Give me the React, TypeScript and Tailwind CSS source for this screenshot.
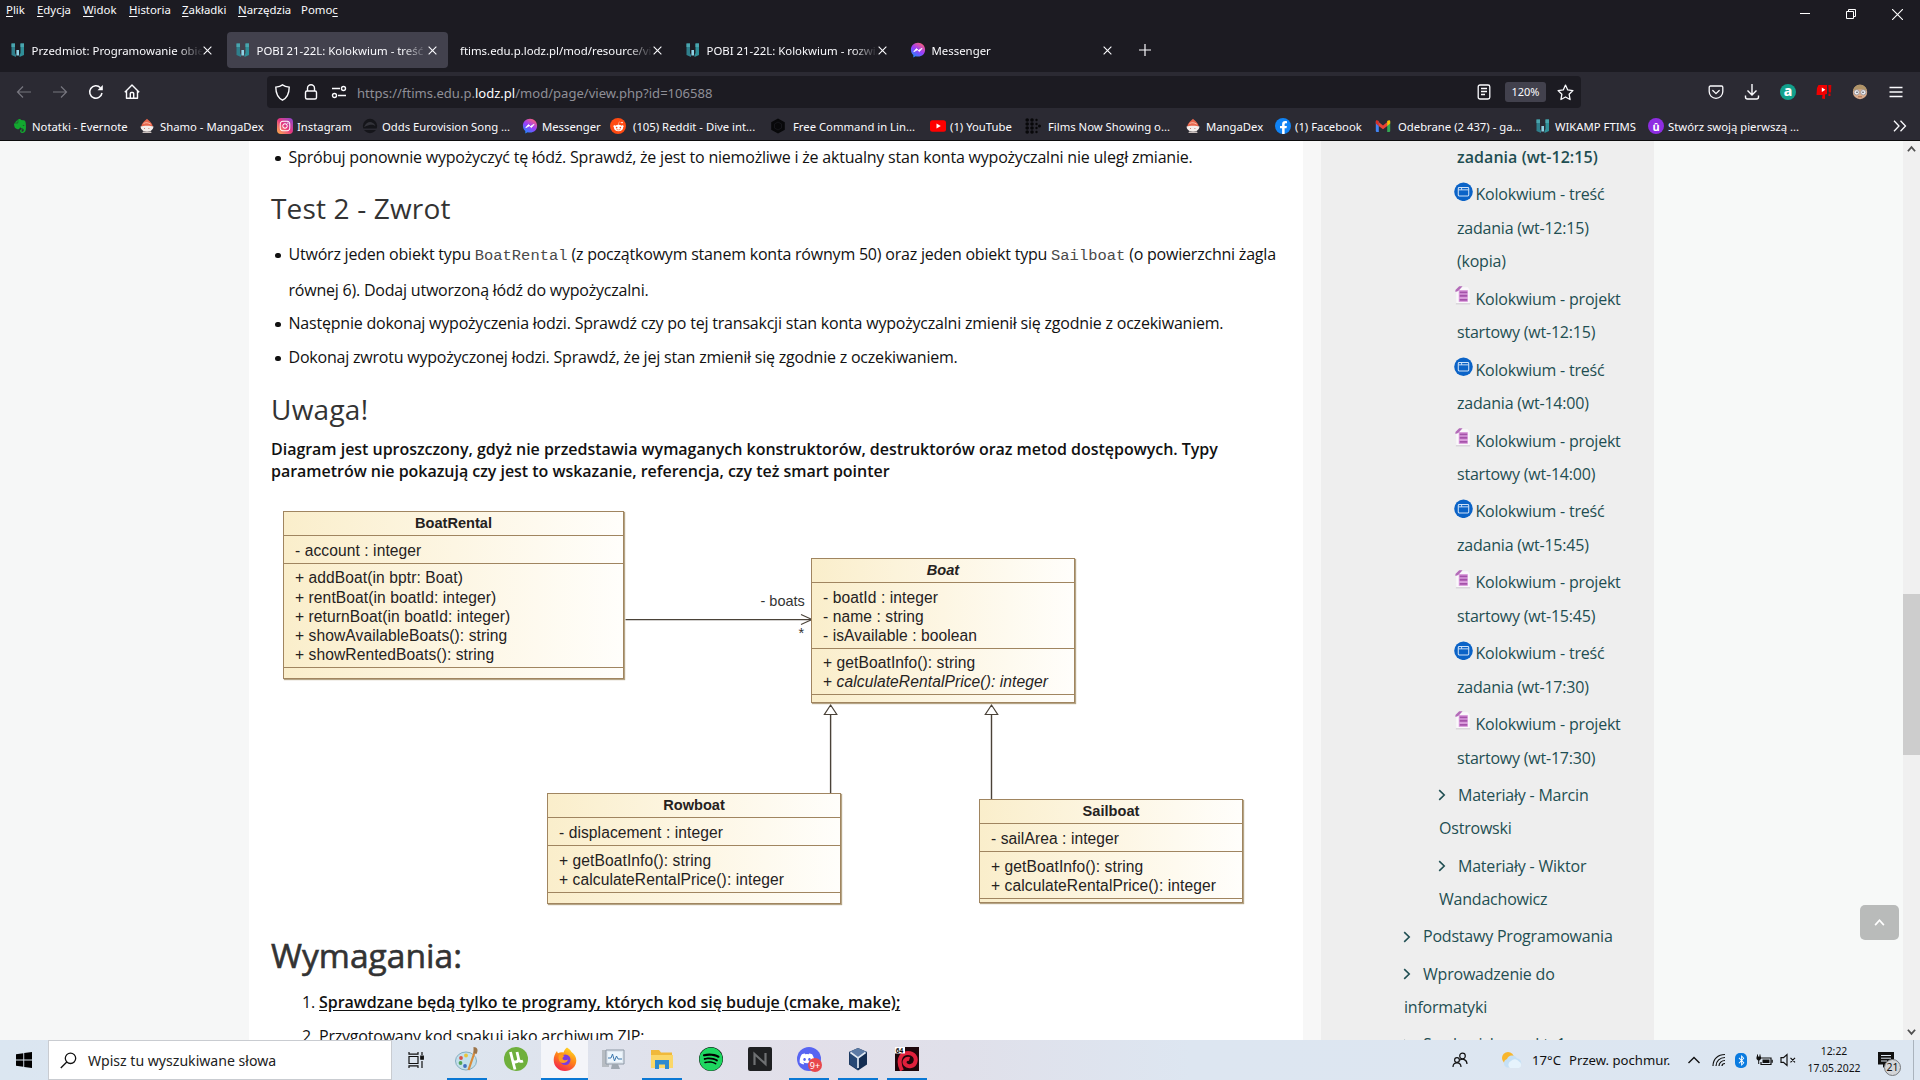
import type { ReactNode } from "react";
import {
  FaDiscord,
  FaEvernote,
  FaFacebookF,
  FaInstagram,
  FaRedditAlien,
  FaSpotify,
  FaBluetoothB,
} from "react-icons/fa";

/* ---------- favicons ---------- */

function Wikamp() {
  return (
    <svg viewBox="0 0 16 16" className="h-4 w-4 shrink-0">
      <path d="M1.500 1.500h3.500v9.500l1 2v2L1.500 13z" fill="#2f7f8c" />
      <path d="M10.500 1.500H14V13l-4.500 2v-2l1-2z" fill="#2f8f98" />
      <path d="M1.500 1.500H5v3.500H1.500zM10.500 1.500H14v3.500h-3.500z" fill="#4aa5ae" />
      <path d="M6.400 8h2.600v5.500H6.400z" fill="#8fd3e6" />
    </svg>
  );
}

function Messenger() {
  return (
    <svg viewBox="0 0 16 16" className="h-4 w-4 shrink-0">
      <defs>
        <linearGradient id="msg" x1="0.2" y1="1" x2="0.8" y2="0">
          <stop offset="0" stopColor="#1a8cff" />
          <stop offset="0.5" stopColor="#9a3dfb" />
          <stop offset="1" stopColor="#ff6072" />
        </linearGradient>
      </defs>
      <path d="M8 .8C3.900.8.900 3.800.900 7.700c0 2.200.9 4 2.400 5.300v2.500l2.300-1.200c.8.200 1.600.3 2.400.3 4.100 0 7.100-3 7.100-6.900S12.100.8 8 .8z" fill="url(#msg)" />
      <path d="M3.800 9.700 6.400 6.600l2 1.800 3.700-2.100-2.700 3.300-2-1.800z" fill="#fff" stroke="#fff" strokeWidth="0.8" />
    </svg>
  );
}

function Mangadex() {
  return (
    <svg viewBox="0 0 16 16" className="h-4 w-4 shrink-0">
      <path d="M8 .8c1.800 1.800 5.300 4 5.800 8H2.200C2.600 5.500 5 3.500 8 .8z" fill="#e8654c" />
      <path d="M4.500 5.500c2-1.200 5-1 7.300.7" stroke="#f7b9a5" strokeWidth="1" fill="none" />
      <path d="M1.500 8.500c3.500-1 9.500-1 13 0-.4 3.200-2.700 5.200-6.500 5.200S1.900 11.700 1.500 8.500z" fill="#f4eeec" />
      <path d="M4 13.600h8l.6 1.400H3.400z" fill="#c9bfbd" />
      <path d="M5 10.500h.8M9.500 10.500h.8" stroke="#c2685a" strokeWidth="1" />
    </svg>
  );
}

function Evernote() {
  return <FaEvernote className="h-4 w-4 shrink-0 text-[#12a82f]" />;
}

function Instagram() {
  return (
    <span className="flex h-4 w-4 shrink-0 items-center justify-center rounded-[4px] bg-gradient-to-tr from-[#fdb03c] via-[#e5337e] to-[#8a3ccf]">
      <FaInstagram className="h-3 w-3 text-white" />
    </span>
  );
}

function Eurovision() {
  return (
    <svg viewBox="0 0 16 16" className="h-4 w-4 shrink-0">
      <circle cx="8" cy="8" r="7.200" fill="#15151a" />
      <path d="M2 9c2-4 4-5 6-5s4 1 5.500 4c-2-1-3.500-1.500-6-1S4 8.500 2 9z" fill="#33333a" />
      <path d="M1 10.500h14v1.500H1z" fill="#2b2a33" />
    </svg>
  );
}

function Reddit() {
  return (
    <span className="flex h-4 w-4 shrink-0 items-center justify-center rounded-full bg-[#ff4a12]">
      <FaRedditAlien className="h-[11px] w-[11px] text-white" />
    </span>
  );
}

function Hexagon() {
  return (
    <svg viewBox="0 0 16 16" className="h-4 w-4 shrink-0">
      <path d="M8 .5 14.800 4.200v7.600L8 15.500 1.200 11.800V4.200z" fill="#08080a" />
      <path d="M8 4 11.500 6v4L8 12 4.500 10V6z" fill="none" stroke="#15151a" />
    </svg>
  );
}

function Youtube() {
  return (
    <svg viewBox="0 0 16 16" className="h-4 w-4 shrink-0">
      <rect x="0" y="2.300" width="16" height="11.400" rx="2.500" fill="#f00" />
      <path d="M6.500 5.500v5L10.800 8z" fill="#fff" />
    </svg>
  );
}

function Films() {
  return (
    <svg viewBox="0 0 16 16" className="h-4 w-4 shrink-0" fill="#08080a">
      {[2.200, 7, 11.500].map((x) =>
        [2, 6, 10, 14].map((y) => <circle key={`${x}-${y}`} cx={x} cy={y} r={x > 10 ? 1.200 : 1.800} />)
      )}
      <circle cx="14.500" cy="8" r="1.500" />
    </svg>
  );
}

function Facebook() {
  return (
    <span className="flex h-4 w-4 shrink-0 items-end justify-center rounded-full bg-[#1083f5]">
      <FaFacebookF className="h-[13px] w-[11px] text-white" />
    </span>
  );
}

function Gmail() {
  return (
    <svg viewBox="0 0 16 16" className="h-4 w-4 shrink-0">
      <path d="M.8 3.500h3V14H1.800a1 1 0 0 1-1-1z" fill="#4285f4" />
      <path d="M12.200 3.500h3V13a1 1 0 0 1-1 1h-2z" fill="#34a853" />
      <path d="M3.700 4 8 7.500 12.300 4v4L8 11.300 3.700 8z" fill="#ea4335" />
      <path d="M.8 5.500V3.500C.8 2 2.200 1.800 3.700 3v5z" fill="#d93025" />
      <path d="M15.200 5.500V3.500c0-1.500-1.400-1.700-3-.5v5z" fill="#fbbc04" />
    </svg>
  );
}

function Uniform() {
  return (
    <span className="flex h-4 w-4 shrink-0 items-center justify-center rounded-full bg-[#8e2de2] text-[11px] leading-none font-bold text-white">
      û
    </span>
  );
}

/* ---------- browser chrome ---------- */

const menu: [string, string, string, string][] = [
  ["", "P", "lik", "w-[31px]"],
  ["", "E", "dycja", "w-[46px]"],
  ["", "W", "idok", "w-[46px]"],
  ["", "H", "istoria", "w-[53px]"],
  ["", "Z", "akładki", "w-[56px]"],
  ["", "N", "arzędzia", "w-[63px]"],
  ["Pomo", "c", "", "w-[45px]"],
];

function CloseX() {
  return (
    <svg viewBox="0 0 10 10" className="h-[9px] w-[9px] shrink-0" stroke="#fbfbfe" strokeWidth="1.200" fill="none">
      <path d="M.7.7l8.600 8.600M9.300.7.7 9.300" />
    </svg>
  );
}

function Tab({ icon, title, active }: { icon?: ReactNode; title: string; active?: boolean }) {
  return (
    <div className={`flex h-9 w-[221px] items-center rounded pl-2 pr-[11.500px] ${active ? "bg-[#42414d]" : ""}`}>
      {icon && <span className="mr-[5.500px]">{icon}</span>}
      <span className="min-w-0 flex-1 overflow-hidden pt-px text-[11.4px] whitespace-nowrap [mask-image:linear-gradient(to_right,black_calc(100%-26px),transparent)]">
        {title}
      </span>
      <CloseX />
    </div>
  );
}

const bookmarks: [() => ReactNode, string, string][] = [
  [Evernote, "Notatki - Evernote", "gap-1 w-[127px]"],
  [Mangadex, "Shamo - MangaDex", "gap-[5px] w-[138px]"],
  [Instagram, "Instagram", "gap-1 w-[85px]"],
  [Eurovision, "Odds Eurovision Song ...", "gap-1 w-[160px]"],
  [Messenger, "Messenger", "gap-1 w-[88px]"],
  [Reddit, "(105) Reddit - Dive int...", "gap-[7px] w-[160px]"],
  [Hexagon, "Free Command in Lin...", "gap-[7px] w-[160px]"],
  [Youtube, "(1) YouTube", "gap-1 w-[95px]"],
  [Films, "Films Now Showing o...", "gap-[7px] w-[160px]"],
  [Mangadex, "MangaDex", "gap-[5px] w-[90px]"],
  [Facebook, "(1) Facebook", "gap-1 w-[100px]"],
  [Gmail, "Odebrane (2 437) - ga...", "gap-[7px] w-[160px]"],
  [Wikamp, "WIKAMP FTIMS", "gap-1 w-[113px]"],
  [Uniform, "Stwórz swoją pierwszą ...", "gap-1 w-[160px]"],
];

function Chrome() {
  return (
    <header className="flex h-[141px] shrink-0 flex-col border-b border-[#0c0c0d] bg-[#1c1b22] font-['Noto_Sans',sans-serif] text-[#fbfbfe]">
      <div className="flex h-7 justify-between pl-[6px]">
        <div className="flex h-5 items-center text-[11.4px] leading-none">
          {menu.map(([a, u, b, w]) => (
            <span key={u} className={w}>
              {a}
              <span className="underline underline-offset-2">{u}</span>
              {b}
            </span>
          ))}
        </div>
        <div className="flex h-7 items-center gap-[36px] pr-[17px]">
          <svg viewBox="0 0 10 10" className="h-[10px] w-[10px]" stroke="#fff"><path d="M0 4.500h10" /></svg>
          <svg viewBox="0 0 10 10" className="h-[10px] w-[10px]" stroke="#fff" fill="none">
            <path d="M.5 2.500h7v7h-7zM2.500 2.500v-2h7v7h-2" />
          </svg>
          <svg viewBox="0 0 10 10" className="h-[11px] w-[11px]" stroke="#fff"><path d="M0 0l10 10M10 0 0 10" /></svg>
        </div>
      </div>
      <div className="flex h-11 items-center gap-1 pl-[2px]">
        <Tab icon={<Wikamp />} title="Przedmiot: Programowanie obiektowe" />
        <Tab icon={<Wikamp />} title="POBI 21-22L: Kolokwium - treść zadania" active />
        <Tab title="ftims.edu.p.lodz.pl/mod/resource/view.php" />
        <Tab icon={<Wikamp />} title="POBI 21-22L: Kolokwium - rozwiązanie" />
        <Tab icon={<Messenger />} title="Messenger" />
        <svg viewBox="0 0 12 12" className="ml-[11.500px] h-3 w-3" stroke="#fbfbfe" strokeWidth="1.200"><path d="M6 0v12M0 6h12" /></svg>
      </div>
      <div className="flex h-10 items-center bg-[#2b2a33]">
        <div className="flex w-[267px] items-center pl-4">
          <svg viewBox="0 0 16 16" className="mr-5 h-4 w-4" stroke="#77767f" strokeWidth="1.200" fill="none"><path d="M15 8H1.500M7 2.500 1.500 8 7 13.500" /></svg>
          <svg viewBox="0 0 16 16" className="mr-5 h-4 w-4" stroke="#77767f" strokeWidth="1.200" fill="none"><path d="M1 8h13.500M9 2.500 14.500 8 9 13.500" /></svg>
          <svg viewBox="0 0 16 16" className="mr-[19.500px] h-4 w-4" stroke="#fbfbfe" strokeWidth="1.500" fill="none"><path d="M14 9a6.200 6.200 0 1 1-1.600-5.300" /><path d="M14.800 1v5.300H9.500z" fill="#fbfbfe" stroke="none" /></svg>
          <svg viewBox="0 0 16 16" className="h-4 w-4" stroke="#fbfbfe" strokeWidth="1.400" fill="none" strokeLinejoin="round"><path d="M.8 8.200 8 1l7.200 7.200M2.500 7v7.200h11V7M6.300 14V9.500c0-.6.4-1 1-1h1.400c.6 0 1 .4 1 1V14" /></svg>
        </div>
        <div className="flex h-8 w-[1314px] items-center rounded bg-[#1c1b22] pl-[7px]">
          <svg viewBox="0 0 16 16" className="h-[17px] w-[17px]" stroke="#fbfbfe" strokeWidth="1.300" fill="none"><path d="M8 .8c2 1.500 4 1.900 6.300 2.200 0 6-1.600 9.700-6.300 12.200C3.300 12.700 1.700 9 1.700 3 4 2.700 6 2.300 8 .8z" /></svg>
          <svg viewBox="0 0 16 16" className="ml-[12px] h-4 w-4" stroke="#fbfbfe" strokeWidth="1.400" fill="none"><rect x="2.500" y="7" width="11" height="8" rx="1.500" /><path d="M4.500 7V4.300a3.500 3.500 0 0 1 7 0V7" /></svg>
          <svg viewBox="0 0 16 16" className="ml-[12px] h-4 w-4" stroke="#fbfbfe" strokeWidth="1.400" fill="none"><path d="M1 4.500h8M7 11.500h8" /><circle cx="12.500" cy="4.500" r="2" /><circle cx="3.500" cy="11.500" r="2" /></svg>
          <span className="ml-[10px] pt-[3px] text-[13.050px] text-[#8f8f97]">
            https://ftims.edu.p.<span className="text-[#fbfbfe]">lodz.pl</span>/mod/page/view.php?id=106588
          </span>
          <div className="ml-auto flex items-center pr-[7px]">
            <svg viewBox="0 0 16 16" className="h-4 w-4" stroke="#fbfbfe" strokeWidth="1.300" fill="none"><rect x="2.200" y="1" width="11.600" height="14" rx="1.800" /><path d="M5 4.500h6M5 7.500h6M5 10.500h4" /></svg>
            <span className="ml-[13px] flex h-5 w-[41px] items-center justify-center rounded-[3px] bg-[#42414d] pt-px text-[11px]">120%</span>
            <svg viewBox="0 0 16 16" className="ml-[11px] h-[17px] w-[17px]" stroke="#fbfbfe" strokeWidth="1.200" fill="none" strokeLinejoin="round"><path d="M8 1l2.100 4.600 4.900.6-3.600 3.400.9 5L8 12.200l-4.300 2.400.9-5L1 6.200l4.900-.6z" /></svg>
          </div>
        </div>
        <div className="ml-auto flex items-center gap-5 pr-4">
          <svg viewBox="0 0 16 16" className="h-4 w-4" stroke="#fbfbfe" strokeWidth="1.300" fill="none" strokeLinecap="round" strokeLinejoin="round"><path d="M1.200 3.200c0-.7.5-1.200 1.200-1.200h11.200c.7 0 1.200.5 1.200 1.200v4.300c0 4-3 6.800-6.800 6.800s-6.800-2.800-6.800-6.800z" /><path d="M4.800 6.500 8 9.600l3.200-3.100" /></svg>
          <svg viewBox="0 0 16 16" className="h-4 w-4" stroke="#fbfbfe" strokeWidth="1.400" fill="none"><path d="M8 0v11M3.500 6.500 8 11l4.500-4.500M1.500 11.500v1.500c0 1.200.8 2 2 2h9c1.200 0 2-.8 2-2v-1.500" /></svg>
          <span className="flex h-4 w-4 items-center justify-center rounded-full bg-[#12a08c] pb-[2px] text-[14px] leading-none font-extrabold text-white">a</span>
          <svg viewBox="0 0 16 16" className="h-4 w-4"><path d="M2.500 1h8.500v9l-2 .5v4.500L6 14.500 6.500 11H.5L1 4z" fill="#f00000" /><path d="M12.300 1h3L15 8.500h-2.200zM12.500 9.500h2V12h-2z" fill="#d40000" /><path d="M5.800 3.500v4.500L9.300 5.800z" fill="#fff" /></svg>
          <svg viewBox="0 0 16 16" className="h-4 w-4"><circle cx="8" cy="8" r="7.200" fill="#d8ab8c" /><path d="M1 7C1.700 2.500 5 .8 8 .8s6.300 1.700 7 6.200C11 4.500 5 4.500 1 7z" fill="#b09468" /><circle cx="4.700" cy="8.300" r="2.600" fill="#e9e9ee" stroke="#8a8a92" strokeWidth=".7" /><circle cx="11.300" cy="8.300" r="2.600" fill="#e9e9ee" stroke="#8a8a92" strokeWidth=".7" /><circle cx="5" cy="8.300" r=".8" fill="#47474f" /><circle cx="11" cy="8.300" r=".8" fill="#47474f" /><path d="M6 12.800h4" stroke="#a8684e" /></svg>
          <svg viewBox="0 0 16 16" className="h-4 w-4" stroke="#fbfbfe" strokeWidth="1.500"><path d="M1.500 3.500h13M1.500 8h13M1.500 12.500h13" /></svg>
        </div>
      </div>
      <div className="flex h-7 items-center bg-[#2b2a33] pl-3">
        {bookmarks.map(([Icon, label, w], i) => (
          <span key={i} className={`flex shrink-0 items-center text-[11.3px] whitespace-nowrap ${w}`}>
            <Icon />
            <span className="pt-[2px]">{label}</span>
          </span>
        ))}
        <svg viewBox="0 0 14 12" className="ml-auto mr-[13px] h-3 w-[14px]" stroke="#fbfbfe" strokeWidth="1.300" fill="none"><path d="M1 .8 6 6l-5 5.200M7.500.8l5 5.200-5 5.200" /></svg>
      </div>
    </header>
  );
}

/* ---------- class diagram ---------- */

function Rows({ lines, className }: { lines: ReactNode[]; className: string }) {
  return (
    <div className={`flex flex-col justify-center border-t border-[#a08560] pt-[2px] pl-[11px] ${className}`}>
      {lines.map((l, i) => (
        <div key={i} className="h-[19.25px] text-[15.6px] leading-[19.25px] tracking-[0.080px] whitespace-pre">{l}</div>
      ))}
    </div>
  );
}

function ClassBox({ name, italic, place, attrs, ops, attrsH, opsH }: {
  name: string; italic?: boolean; place: string; attrs: string[]; ops: ReactNode[]; attrsH: string; opsH: string;
}) {
  return (
    <div className={`absolute flex flex-col border border-[#a08560] bg-gradient-to-r from-[#faeecb] via-[#fdf6e3] to-[#fffefb] text-[#25221e] shadow-[1px_1px_1px_#b5a586] ${place}`}>
      <div className={`flex h-[23px] shrink-0 items-center justify-center text-[14.6px] font-bold ${italic ? "italic" : ""}`}>{name}</div>
      <Rows lines={attrs} className={attrsH} />
      <Rows lines={ops} className={opsH} />
      <div className="flex-1 border-t border-[#a08560]" />
    </div>
  );
}

function Diagram() {
  return (
    <div className="relative h-[453px] tracking-normal font-['Liberation_Sans',sans-serif]">
      <svg viewBox="0 0 1032 453" className="absolute inset-0 h-[453px] w-[1032px]" stroke="#4a4238" fill="none" strokeWidth="1.400">
        <path d="M354.500 137.600H541" />
        <path d="M530 132.600 541 137.600 530 142.600" strokeWidth="1.100" />
        <path d="M559.600 232.500V312M720.500 232.500V318" />
        <path d="M559.600 223 565.800 232.500H553.400zM720.500 223 726.700 232.500H714.300z" fill="#fff" strokeWidth="1.200" />
      </svg>
      <span className="absolute top-[110px] left-[489.500px] text-[14.500px] leading-[18px] text-[#333]">- boats</span>
      <span className="absolute top-[142px] left-[527.500px] text-[14.500px] leading-[18px] text-[#333]">*</span>
      <ClassBox
        name="BoatRental"
        place="left-[12px] top-[29px] h-[168px] w-[341px]"
        attrs={["- account : integer"]}
        ops={["+ addBoat(in bptr: Boat)", "+ rentBoat(in boatId: integer)", "+ returnBoat(in boatId: integer)", "+ showAvailableBoats(): string", "+ showRentedBoats(): string"]}
        attrsH="h-[28px]"
        opsH="h-[104px]"
      />
      <ClassBox
        name="Boat"
        italic
        place="left-[540px] top-[76px] h-[145px] w-[264px]"
        attrs={["- boatId : integer", "- name : string", "- isAvailable : boolean"]}
        ops={["+ getBoatInfo(): string", <span key="c">+ <i>calculateRentalPrice(): integer</i></span>]}
        attrsH="h-[66px]"
        opsH="h-[46px]"
      />
      <ClassBox
        name="Rowboat"
        place="left-[276px] top-[311px] h-[111px] w-[294px]"
        attrs={["- displacement : integer"]}
        ops={["+ getBoatInfo(): string", "+ calculateRentalPrice(): integer"]}
        attrsH="h-[28px]"
        opsH="h-[47px]"
      />
      <ClassBox
        name="Sailboat"
        place="left-[708px] top-[317px] h-[104px] w-[264px]"
        attrs={["- sailArea : integer"]}
        ops={["+ getBoatInfo(): string", "+ calculateRentalPrice(): integer"]}
        attrsH="h-[28px]"
        opsH="h-[47px]"
      />
    </div>
  );
}

/* ---------- article ---------- */

function Bullet({ children, tall }: { children: ReactNode; tall?: boolean }) {
  return (
    <li className={`flex ${tall ? "-mb-px leading-[36px]" : "leading-[33.6px]"}`}>
      <span className={`mr-[8px] ml-1 h-[5.500px] w-[5.500px] shrink-0 rounded-full bg-[#111] ${tall ? "mt-[17px]" : "mt-[15px]"}`} />
      <span className="whitespace-nowrap">{children}</span>
    </li>
  );
}

function Code({ children }: { children: string }) {
  return <code className="font-['Liberation_Mono',monospace] text-[15.450px] leading-none tracking-normal text-[#4a4a4a]">{children}</code>;
}

function Article() {
  return (
    <article className="w-[1054px] shrink-0 bg-white pr-4 pl-[22px] text-base tracking-[-0.21px] text-[#111]">
      <ul className="-mt-[0.300px]">
        <Bullet>Spróbuj ponownie wypożyczyć tę łódź. Sprawdź, że jest to niemożliwe i że aktualny stan konta wypożyczalni nie uległ zmianie.</Bullet>
      </ul>
      <h3 className="mt-[16.700px] text-[28px] leading-[34px] tracking-[0.160px] text-[#333]">Test 2 - Zwrot</h3>
      <ul className="mt-[11px]">
        <Bullet tall>
          Utwórz jeden obiekt typu <Code>BoatRental</Code> (z początkowym stanem konta równym 50) oraz jeden obiekt typu <Code>Sailboat</Code> (o powierzchni żagla
          <br />
          równej 6). Dodaj utworzoną łódź do wypożyczalni.
        </Bullet>
        <Bullet>Następnie dokonaj wypożyczenia łodzi. Sprawdź czy po tej transakcji stan konta wypożyczalni zmienił się zgodnie z oczekiwaniem.</Bullet>
        <Bullet>Dokonaj zwrotu wypożyczonej łodzi. Sprawdź, że jej stan zmienił się zgodnie z oczekiwaniem.</Bullet>
      </ul>
      <h3 className="mt-[17.800px] text-[28px] leading-[34px] tracking-[0.250px] text-[#333]">Uwaga!</h3>
      <p className="mt-[12px] leading-[22px] font-semibold tracking-[-0.030px] whitespace-nowrap">
        Diagram jest uproszczony, gdyż nie przedstawia wymaganych konstruktorów, destruktorów oraz metod dostępowych. Typy
        <br />
        parametrów nie pokazują czy jest to wskazanie, referencja, czy też smart pointer
      </p>
      <Diagram />
      <h2 className="text-[33.600px] leading-[40px] tracking-normal text-[#333] [-webkit-text-stroke:0.6px_#333]">Wymagania:</h2>
      <ol className="mt-[11px] pl-[31px] leading-[33.600px]">
        <li className="flex">
          <span className="w-[17px]">1.</span>
          <span className="font-semibold tracking-[-0.035px] underline underline-offset-2">Sprawdzane będą tylko te programy, których kod się buduje (cmake, make);</span>
        </li>
        <li className="flex">
          <span className="w-[17px]">2.</span>
          <span>Przygotowany kod spakuj jako archiwum ZIP;</span>
        </li>
      </ol>
    </article>
  );
}

/* ---------- course navigation ---------- */

function PageIcon() {
  return (
    <svg viewBox="0 0 20 20" className="relative -top-[4.500px] mr-[2.500px] -ml-[3px] inline-block h-[19.500px] w-[19px]">
      <circle cx="10" cy="10" r="9.800" fill="#0b63c7" />
      <rect x="4.500" y="5.500" width="11" height="9" rx="1" fill="none" stroke="#cfe2f7" strokeWidth="1.100" />
      <path d="M4.500 8h11M8 5.500V8" stroke="#cfe2f7" strokeWidth="1" />
    </svg>
  );
}

function FileIcon() {
  return (
    <svg viewBox="0 0 20 20" className="relative -top-[4.500px] mr-[2.500px] -ml-[3px] inline-block h-[19.500px] w-[19px]">
      <path d="M6 1h8.500L16.500 4v15H2.500V5z" fill="#faf8fb" />
      <path d="M2 18.500h15" stroke="#cfccd0" strokeWidth="1.200" />
      <path d="M1.500 6V4L5.500 0H9L4.500 5z" fill="#b36bb8" />
      <path d="M5 4h9.500v12.500H5z" fill="#d99bdb" />
      <path d="M6 6.500h8M6 10h8M6 14.300h8" stroke="#a552aa" strokeWidth="1.900" />
    </svg>
  );
}

function Chevron() {
  return (
    <svg viewBox="0 0 8 12" className="relative -top-[1.500px] mr-[12px] -ml-px inline-block h-[12px] w-[8px]" stroke="#1f4e52" strokeWidth="1.600" fill="none">
      <path d="M1.200 1.200 6.200 6l-5 4.800" />
    </svg>
  );
}

const activities: { file?: boolean; lines: string[] }[] = [
  { lines: ["Kolokwium - treść", "zadania (wt-12:15)", "(kopia)"] },
  { file: true, lines: ["Kolokwium - projekt", "startowy (wt-12:15)"] },
  { lines: ["Kolokwium - treść", "zadania (wt-14:00)"] },
  { file: true, lines: ["Kolokwium - projekt", "startowy (wt-14:00)"] },
  { lines: ["Kolokwium - treść", "zadania (wt-15:45)"] },
  { file: true, lines: ["Kolokwium - projekt", "startowy (wt-15:45)"] },
  { lines: ["Kolokwium - treść", "zadania (wt-17:30)"] },
  { file: true, lines: ["Kolokwium - projekt", "startowy (wt-17:30)"] },
];

const folders: { indent: string; lines: string[] }[] = [
  { indent: "pl-[118px]", lines: ["Materiały - Marcin", "Ostrowski"] },
  { indent: "pl-[118px]", lines: ["Materiały - Wiktor", "Wandachowicz"] },
  { indent: "pl-[83px]", lines: ["Podstawy Programowania"] },
  { indent: "pl-[83px]", lines: ["Wprowadzenie do", "informatyki"] },
  { indent: "pl-[83px]", lines: ["Srodowisko pr. kt. 1"] },
];

function Sidebar() {
  return (
    <aside className="w-[333px] shrink-0 overflow-hidden bg-[#eeeeee] text-base leading-[33.600px] tracking-[-0.21px] whitespace-nowrap text-[#1f4e52]">
      <div className="pl-[136px] font-semibold tracking-[0.050px]">zadania (wt-12:15)</div>
      {activities.map((a, i) => (
        <div key={i} className="mt-[3.700px] pl-[136px]">
          {a.lines.map((l, j) => (
            <div key={l} className="h-[33.600px]">
              {j === 0 && (a.file ? <FileIcon /> : <PageIcon />)}
              {l}
            </div>
          ))}
        </div>
      ))}
      {folders.map((f) => (
        <div key={f.lines[0]} className={`mt-[3.600px] ${f.indent}`}>
          {f.lines.map((l, j) => (
            <div key={l} className="h-[33.600px]">
              {j === 0 && <Chevron />}
              {l}
            </div>
          ))}
        </div>
      ))}
    </aside>
  );
}

/* ---------- taskbar ---------- */

function TaskItem({ children, open, active, w }: { children: ReactNode; open?: boolean; active?: boolean; w: string }) {
  return (
    <div className={`flex h-10 shrink-0 flex-col items-center ${w}`}>
      <div className={`flex h-[38px] w-[47px] items-center justify-center ${active ? "bg-[#f4f5f9]" : ""}`}>{children}</div>
      <div className={`h-[2px] ${active ? "w-[47px]" : "w-10"} ${open ? "bg-[#0a78d4]" : ""}`} />
    </div>
  );
}

function Taskbar() {
  return (
    <footer className="flex h-10 shrink-0 bg-[linear-gradient(to_right,#dbe6f1_0%,#dde5ef_24%,#e2dfe9_42%,#e0e0ea_50%,#dde6f1_62%,#dce6f1_100%)] font-['Noto_Sans',sans-serif] text-[#111]">
      <div className="flex w-12 items-center justify-center">
        <svg viewBox="0 0 16 16" className="h-4 w-4"><path d="M0 2.200 7.300 1.200v6.400H0zM8.200 1.100 16 0v7.600H8.200zM0 8.400h7.300v6.400L0 13.800zM8.200 8.400H16V16l-7.800-1.100z" /></svg>
      </div>
      <div className="flex w-[344px] items-center border border-[#c9ccd1] bg-white pl-[11px]">
        <svg viewBox="0 0 17 17" className="h-[17px] w-[17px]" stroke="#111" strokeWidth="1.300" fill="none"><circle cx="10.500" cy="6.300" r="5.200" /><path d="M6.800 10 .8 16" /></svg>
        <span className="ml-[11px] pt-px text-[14.100px] text-[#222]">Wpisz tu wyszukiwane słowa</span>
      </div>
      <div className="flex w-[50.500px] items-center justify-center pr-[3px]">
        <svg viewBox="0 0 17 16" className="h-4 w-[17px]" stroke="#111" strokeWidth="1.200" fill="none"><path d="M2 4.500h9v7H2zM2 0v2.200h9V0M2 16v-2.200h9V16M15 0v3M15 9v7" /><path d="M13.800 4.200h2.500v3h-2.500z" fill="#111" /></svg>
      </div>
      <TaskItem w="w-[49px]" open>
        <svg viewBox="0 0 24 24" className="h-6 w-6"><ellipse cx="11" cy="14" rx="10.500" ry="9" fill="#c3e0ec" stroke="#84adc0" /><circle cx="6" cy="11" r="1.900" fill="#d9534a" /><circle cx="11" cy="8.500" r="1.900" fill="#e8c43c" /><circle cx="5.500" cy="16" r="1.900" fill="#4fa457" /><circle cx="10" cy="19" r="1.900" fill="#3e6fc0" /><path d="M20 4 13.500 23" stroke="#d98b3a" strokeWidth="2.200" /><path d="M18.500 0c4 0 5 3 3 7l-3-1z" fill="#9c7449" /></svg>
      </TaskItem>
      <TaskItem w="w-[49px]">
        <svg viewBox="0 0 24 24" className="h-6 w-6"><circle cx="12" cy="12" r="12" fill="#6fb03c" /><path d="M6.500 5 8.500 13c.8 3 6.500 2.600 6-1.500L13 5M14.500 11.500c.5 2.800 2 3.500 4.500 2.500M8.500 13l2.500 9.500" stroke="#fff" strokeWidth="2.800" fill="none" /></svg>
      </TaskItem>
      <TaskItem w="w-[48px]" open active>
        <svg viewBox="0 0 24 24" className="h-6 w-6">
          <defs><linearGradient id="ffx" x1="0.8" y1="0" x2="0.3" y2="1"><stop offset="0" stopColor="#ffe226" /><stop offset="0.45" stopColor="#ff8a16" /><stop offset="1" stopColor="#f4224e" /></linearGradient></defs>
          <path d="M14 .5c2.500 1.500 3.800 3 4.500 4.500 3 2 4.800 5 4.800 8.500C23.300 19.500 18.500 24 12 24S.7 19.300.7 13c0-3.500 1.300-6.500 3.300-9 .2 1 .5 1.700 1 2.200C7 5 9 5 10.500 5.500 11.200 3.500 12.300 1.800 14 .5z" fill="url(#ffx)" />
          <circle cx="12.300" cy="12.800" r="5.200" fill="#7a3be0" />
          <path d="M6 8c2-1 4 0 5.500 1-1.500 1-2 2-2 3 2 2 4 1 5.500.5-.5 3-5 4.500-8 2.500C5.500 13.500 5 10 6 8z" fill="#ff9a1f" />
        </svg>
      </TaskItem>
      <TaskItem w="w-[49px]">
        <svg viewBox="0 0 24 24" className="h-6 w-6"><path d="M1 3h7v17H1z" fill="#b7bcc2" /><path d="M5 3h18v14H5z" fill="#dfe7ef" stroke="#8d98a5" /><path d="M7 5h14v10H7z" fill="#eef6fc" /><path d="M7 11h3l1.500-4 2 7 2-5 1.500 3h4" stroke="#3d78ad" fill="none" /><path d="M11 17h6l2 5h-9z" fill="#9fa8b1" /></svg>
      </TaskItem>
      <TaskItem w="w-[49px]" open>
        <svg viewBox="0 0 24 24" className="h-6 w-6"><path d="M1 3h8l2 2.500h11V20H1z" fill="#f0b93a" /><path d="M1 8h22v13H1z" fill="#fbd768" /><path d="M5 13h14v9h-4v-4.500H9V22H5z" fill="#2f8ad0" /></svg>
      </TaskItem>
      <TaskItem w="w-[49px]">
        <span className="flex h-6 w-6 items-center justify-center rounded-full bg-black"><FaSpotify className="h-6 w-6 shrink-0 text-[#1ed760]" /></span>
      </TaskItem>
      <TaskItem w="w-[49px]">
        <svg viewBox="0 0 24 24" className="h-6 w-6"><rect width="24" height="24" rx="2" fill="#1f2022" /><path d="M6.500 18V7L17.500 17V6" stroke="#6e7072" strokeWidth="2.200" fill="none" /></svg>
      </TaskItem>
      <TaskItem w="w-[49px]" open>
        <span className="relative flex h-6 w-6 items-center justify-center rounded-full bg-[#5865f2]">
          <FaDiscord className="mr-1 mb-px h-4 w-4 text-white" />
          <span className="absolute -right-px -bottom-px flex h-[14px] w-[14px] items-center justify-center rounded-full bg-[#e8474c] text-[9px] leading-none text-white">9+</span>
        </span>
      </TaskItem>
      <TaskItem w="w-[49px]" open>
        <svg viewBox="0 0 24 24" className="h-6 w-6"><path d="M12 1 21 5v12.500L12 23.500 3 17.500V5z" fill="#142d52" /><path d="M12 1 21 5l-9 6-9-6z" fill="#5d7ba5" /><path d="M3.500 6 12 12v11l-8.500-6z" fill="#274875" /><path d="M4.500 5.500 12 11l7.500-5.500M12 11v10" stroke="#dfe7f1" strokeWidth="1.700" fill="none" /></svg>
      </TaskItem>
      <TaskItem w="w-[49px]" open>
        <svg viewBox="0 0 24 24" className="h-6 w-6"><rect width="24" height="24" fill="#1d060b" /><path d="M7 23.500C2.500 15 4.500 6 13 6c6 0 8.500 4.500 7.500 8.500-1 5-7.500 6-10 3-2.500-3 .5-6.500 4-5.500" stroke="#e0203c" strokeWidth="4" fill="none" /><rect width="10" height="6.500" fill="#fff" /><text x="0.800" y="5.600" fontSize="6.500" fontWeight="700" fill="#111">64</text></svg>
      </TaskItem>

      <div className="ml-auto flex items-center">
        <svg viewBox="0 0 16 16" className="mr-[33px] h-4 w-4" stroke="#111" strokeWidth="1.200" fill="none"><circle cx="10.500" cy="4" r="2.800" /><circle cx="5" cy="8" r="2.400" /><path d="M1 15c0-2.500 1.500-4.200 4-4.200S9 12.500 9 15M8 8c2-1.500 7-.8 7 4" /></svg>
        <svg viewBox="0 0 22 18" className="h-[18px] w-[22px]"><circle cx="7" cy="7" r="6" fill="#f8b62d" /><path d="M6 16.500a4.500 4.500 0 0 1 0-8.500 5.500 5.500 0 0 1 10-.5 4.600 4.600 0 0 1 1 9z" fill="#c5e0f5" /><path d="M9 17a4 4 0 0 1 1-7 5 5 0 0 1 8 .5 3.500 3.500 0 0 1 0 6.500z" fill="#e6f3fc" /></svg>
        <span className="ml-[9px] pt-px text-[13.150px]">17°C</span>
        <span className="ml-[8px] w-[119px] pt-px text-[13.150px] whitespace-nowrap">Przew. pochmur.</span>
        <svg viewBox="0 0 12 8" className="h-2 w-3" stroke="#111" strokeWidth="1.400" fill="none"><path d="M.5 7 6 1.500 11.500 7" /></svg>
        <svg viewBox="0 0 14 14" className="ml-[12px] h-[14px] w-[14px]" stroke="#111" strokeWidth="1.200" fill="none"><path d="M1 13C1 6 6 1.500 13 1.500M4 13c0-5 4-8.500 9-8.500M7 13c0-3 2.500-5.500 6-5.500M10 13c0-1.500 1.200-2.500 3-2.500" /></svg>
        <span className="ml-[9px] flex h-[15px] w-3 items-center justify-center rounded-[5px] bg-[#0a7be0]"><FaBluetoothB className="h-[11px] w-[9px] text-white" /></span>
        <svg viewBox="0 0 17 12" className="ml-[9px] h-3 w-[17px]"><path d="M3.500 4H15v6.500H5V8" stroke="#111" strokeWidth="1.200" fill="none" /><path d="M6.500 5.500h7V9h-7zM15.500 5.800h1.300v3h-1.300zM.5 2.500h4.500v2.500L3.500 6.500H2L.5 5zM1 .5h1v2H1zM3.500.5h1v2h-1zM2.200 6h1v4h-1z" fill="#111" /></svg>
        <svg viewBox="0 0 16 14" className="ml-[7px] h-[14px] w-4" stroke="#111" strokeWidth="1.200" fill="none"><path d="M1 4.700h2.500L7 1.500v11L3.500 9.300H1zM10.500 4.800l4.500 4.500M15 4.800l-4.500 4.500" /></svg>
        <div className="ml-[10px] w-[56px] text-center text-[10.400px] leading-[17.500px] whitespace-nowrap">
          <div>12:22</div>
          <div>17.05.2022</div>
        </div>
        <div className="relative ml-[16px] h-10 w-9 border-r border-[#aab3bd]">
          <svg viewBox="0 0 16 16" className="absolute top-[12px] left-0 h-4 w-4"><path d="M0 0h16v12.500H8L5 16v-3.500H0z" fill="#111" /><path d="M3 3.500h10M3 6.200h10M3 9h6" stroke="#dce6f1" /></svg>
          <span className="absolute top-[19px] left-[6px] flex h-[17px] w-[17px] items-center justify-center rounded-full border border-[#77797d] bg-[#d3d5d8] text-[10.500px] leading-none">21</span>
        </div>
        <div className="w-[6px]" />
      </div>
    </footer>
  );
}

export default function App() {
  return (
    <div className="flex h-[1080px] w-[1920px] flex-col overflow-hidden bg-[#f6f8f7] font-['Open_Sans',sans-serif]">
      <Chrome />
      <main className="flex min-h-0 flex-1 overflow-hidden">
        <div className="w-[249px] shrink-0 bg-[#f6f7f7]" />
        <Article />
        <div className="w-[18px] shrink-0 bg-[#f7f7f7]" />
        <Sidebar />
        <div className="flex flex-1 items-end justify-end bg-[#f7f9f8] pr-[4px] pb-[100px]">
          <button className="flex h-[35px] w-[39px] items-center justify-center rounded-[5px] bg-[#b9bbba]">
            <svg viewBox="0 0 12 8" className="h-[7px] w-[11px]" stroke="#fff" strokeWidth="1.900" fill="none"><path d="M1 7l5-5.500L11 7" /></svg>
          </button>
        </div>
        <div className="flex w-[17px] shrink-0 flex-col items-center bg-[#f0f0f0] py-1">
          <svg viewBox="0 0 10 8" className="h-2 w-[9px]" stroke="#505050" strokeWidth="2" fill="none"><path d="M1 6.500 5 2l4 4.500" /></svg>
          <div className="mt-[441px] h-[161px] w-[17px] bg-[#cdcdcd]" />
          <svg viewBox="0 0 10 8" className="mt-auto h-2 w-[9px]" stroke="#505050" strokeWidth="2" fill="none"><path d="M1 1.500 5 6l4-4.500" /></svg>
        </div>
      </main>
      <Taskbar />
    </div>
  );
}
